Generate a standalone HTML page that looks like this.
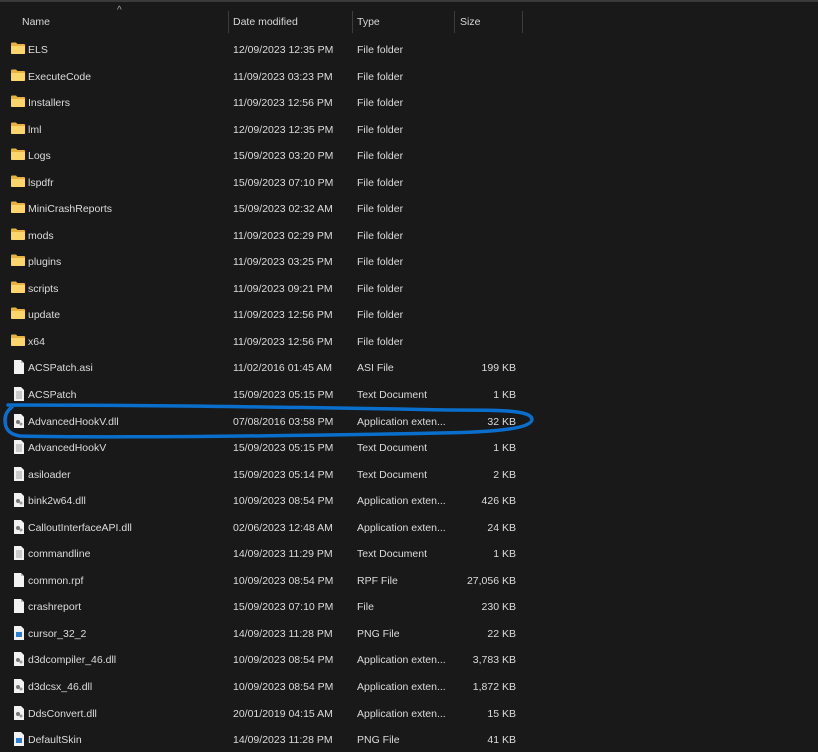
<!DOCTYPE html>
<html><head><meta charset="utf-8"><style>
body{margin:0;width:818px;height:750px;background:#191919;overflow:hidden;font-family:"Segoe UI","Liberation Sans",sans-serif;font-size:10.5px;color:#dcdcdc;position:relative}
.top{position:absolute;left:0;top:0;width:818px;height:2px;background:#3a3a3a}
.h{position:absolute;top:16px;color:#d8d8d8}
.sep{position:absolute;top:11px;width:1px;height:22px;background:#3c3c3c}
.r{position:absolute;left:0;width:818px;height:26px}
.r span{position:absolute;top:8px;white-space:nowrap}
.n{left:28px}.d{left:233px}.t{left:357px}.s{left:440px;width:76px;text-align:right}
.ic{position:absolute;left:11px;top:6px}
</style></head><body>
<div class="top"></div>
<div class="h" style="left:22px">Name</div>
<div class="h" style="left:117px;top:5px;font-size:10px;color:#aaa">^</div>
<div class="sep" style="left:228px"></div><div class="h" style="left:233px">Date modified</div>
<div class="sep" style="left:352px"></div><div class="h" style="left:357px">Type</div>
<div class="sep" style="left:454px"></div><div class="h" style="left:460px">Size</div>
<div class="sep" style="left:522px"></div>
<svg width="0" height="0" style="position:absolute"><defs>
<symbol id="fo" viewBox="0 0 14 12"><path d="M0 1.5Q0 .5 1 .5H5L6.5 2H13Q14 2 14 3V11Q14 12 13 12H1Q0 12 0 11Z" fill="#e8b23c"/><path d="M0 4H14V11Q14 12 13 12H1Q0 12 0 11Z" fill="#fcd66a"/></symbol>
<symbol id="fi" viewBox="0 0 12 14"><path d="M1 0H8L11 3V14H1Z" fill="#f2f2f2"/><path d="M8 0V3H11" fill="#bbb"/></symbol>
<symbol id="tx" viewBox="0 0 12 14"><path d="M1 0H8L11 3V14H1Z" fill="#f2f2f2"/><path d="M3 5H9M3 7H9M3 9H9M3 11H9" stroke="#888" stroke-width=".8"/></symbol>
<symbol id="dl" viewBox="0 0 12 14"><path d="M1 0H8L11 3V14H1Z" fill="#f2f2f2"/><circle cx="5" cy="8" r="2" fill="#777"/><circle cx="8" cy="10" r="1.5" fill="#999"/></symbol>
<symbol id="pn" viewBox="0 0 12 14"><path d="M1 0H8L11 3V14H1Z" fill="#f2f2f2"/><rect x="3" y="6" width="6" height="5" fill="#2a7fd4"/></symbol>
</defs></svg>
<div style="position:absolute;left:0;top:36px">
<div class="r" style="top:0px"><svg class="ic" width="14" height="12"><use href="#fo"/></svg><span class="n">ELS</span><span class="d">12/09/2023 12:35 PM</span><span class="t">File folder</span></div>
<div class="r" style="top:26.54px"><svg class="ic" width="14" height="12"><use href="#fo"/></svg><span class="n">ExecuteCode</span><span class="d">11/09/2023 03:23 PM</span><span class="t">File folder</span></div>
<div class="r" style="top:53.08px"><svg class="ic" width="14" height="12"><use href="#fo"/></svg><span class="n">Installers</span><span class="d">11/09/2023 12:56 PM</span><span class="t">File folder</span></div>
<div class="r" style="top:79.62px"><svg class="ic" width="14" height="12"><use href="#fo"/></svg><span class="n">lml</span><span class="d">12/09/2023 12:35 PM</span><span class="t">File folder</span></div>
<div class="r" style="top:106.16px"><svg class="ic" width="14" height="12"><use href="#fo"/></svg><span class="n">Logs</span><span class="d">15/09/2023 03:20 PM</span><span class="t">File folder</span></div>
<div class="r" style="top:132.7px"><svg class="ic" width="14" height="12"><use href="#fo"/></svg><span class="n">lspdfr</span><span class="d">15/09/2023 07:10 PM</span><span class="t">File folder</span></div>
<div class="r" style="top:159.24px"><svg class="ic" width="14" height="12"><use href="#fo"/></svg><span class="n">MiniCrashReports</span><span class="d">15/09/2023 02:32 AM</span><span class="t">File folder</span></div>
<div class="r" style="top:185.78px"><svg class="ic" width="14" height="12"><use href="#fo"/></svg><span class="n">mods</span><span class="d">11/09/2023 02:29 PM</span><span class="t">File folder</span></div>
<div class="r" style="top:212.32px"><svg class="ic" width="14" height="12"><use href="#fo"/></svg><span class="n">plugins</span><span class="d">11/09/2023 03:25 PM</span><span class="t">File folder</span></div>
<div class="r" style="top:238.86px"><svg class="ic" width="14" height="12"><use href="#fo"/></svg><span class="n">scripts</span><span class="d">11/09/2023 09:21 PM</span><span class="t">File folder</span></div>
<div class="r" style="top:265.4px"><svg class="ic" width="14" height="12"><use href="#fo"/></svg><span class="n">update</span><span class="d">11/09/2023 12:56 PM</span><span class="t">File folder</span></div>
<div class="r" style="top:291.94px"><svg class="ic" width="14" height="12"><use href="#fo"/></svg><span class="n">x64</span><span class="d">11/09/2023 12:56 PM</span><span class="t">File folder</span></div>
<div class="r" style="top:318.48px"><svg class="ic" style="left:13px;top:6px" width="12" height="14"><use href="#fi"/></svg><span class="n">ACSPatch.asi</span><span class="d">11/02/2016 01:45 AM</span><span class="t">ASI File</span><span class="s">199 KB</span></div>
<div class="r" style="top:345.02px"><svg class="ic" style="left:13px;top:6px" width="12" height="14"><use href="#tx"/></svg><span class="n">ACSPatch</span><span class="d">15/09/2023 05:15 PM</span><span class="t">Text Document</span><span class="s">1 KB</span></div>
<div class="r" style="top:371.56px"><svg class="ic" style="left:13px;top:6px" width="12" height="14"><use href="#dl"/></svg><span class="n">AdvancedHookV.dll</span><span class="d">07/08/2016 03:58 PM</span><span class="t">Application exten...</span><span class="s">32 KB</span></div>
<div class="r" style="top:398.1px"><svg class="ic" style="left:13px;top:6px" width="12" height="14"><use href="#tx"/></svg><span class="n">AdvancedHookV</span><span class="d">15/09/2023 05:15 PM</span><span class="t">Text Document</span><span class="s">1 KB</span></div>
<div class="r" style="top:424.64px"><svg class="ic" style="left:13px;top:6px" width="12" height="14"><use href="#tx"/></svg><span class="n">asiloader</span><span class="d">15/09/2023 05:14 PM</span><span class="t">Text Document</span><span class="s">2 KB</span></div>
<div class="r" style="top:451.18px"><svg class="ic" style="left:13px;top:6px" width="12" height="14"><use href="#dl"/></svg><span class="n">bink2w64.dll</span><span class="d">10/09/2023 08:54 PM</span><span class="t">Application exten...</span><span class="s">426 KB</span></div>
<div class="r" style="top:477.72px"><svg class="ic" style="left:13px;top:6px" width="12" height="14"><use href="#dl"/></svg><span class="n">CalloutInterfaceAPI.dll</span><span class="d">02/06/2023 12:48 AM</span><span class="t">Application exten...</span><span class="s">24 KB</span></div>
<div class="r" style="top:504.26px"><svg class="ic" style="left:13px;top:6px" width="12" height="14"><use href="#tx"/></svg><span class="n">commandline</span><span class="d">14/09/2023 11:29 PM</span><span class="t">Text Document</span><span class="s">1 KB</span></div>
<div class="r" style="top:530.8px"><svg class="ic" style="left:13px;top:6px" width="12" height="14"><use href="#fi"/></svg><span class="n">common.rpf</span><span class="d">10/09/2023 08:54 PM</span><span class="t">RPF File</span><span class="s">27,056 KB</span></div>
<div class="r" style="top:557.34px"><svg class="ic" style="left:13px;top:6px" width="12" height="14"><use href="#fi"/></svg><span class="n">crashreport</span><span class="d">15/09/2023 07:10 PM</span><span class="t">File</span><span class="s">230 KB</span></div>
<div class="r" style="top:583.88px"><svg class="ic" style="left:13px;top:6px" width="12" height="14"><use href="#pn"/></svg><span class="n">cursor_32_2</span><span class="d">14/09/2023 11:28 PM</span><span class="t">PNG File</span><span class="s">22 KB</span></div>
<div class="r" style="top:610.42px"><svg class="ic" style="left:13px;top:6px" width="12" height="14"><use href="#dl"/></svg><span class="n">d3dcompiler_46.dll</span><span class="d">10/09/2023 08:54 PM</span><span class="t">Application exten...</span><span class="s">3,783 KB</span></div>
<div class="r" style="top:636.96px"><svg class="ic" style="left:13px;top:6px" width="12" height="14"><use href="#dl"/></svg><span class="n">d3dcsx_46.dll</span><span class="d">10/09/2023 08:54 PM</span><span class="t">Application exten...</span><span class="s">1,872 KB</span></div>
<div class="r" style="top:663.5px"><svg class="ic" style="left:13px;top:6px" width="12" height="14"><use href="#dl"/></svg><span class="n">DdsConvert.dll</span><span class="d">20/01/2019 04:15 AM</span><span class="t">Application exten...</span><span class="s">15 KB</span></div>
<div class="r" style="top:690.04px"><svg class="ic" style="left:13px;top:6px" width="12" height="14"><use href="#pn"/></svg><span class="n">DefaultSkin</span><span class="d">14/09/2023 11:28 PM</span><span class="t">PNG File</span><span class="s">41 KB</span></div>
</div>
<svg style="position:absolute;left:0;top:0" width="818" height="750"><path d="M8 405 C150 405 350 408 450 410 C500 410 530 410 532 419 C532 428 500 432 440 433 C300 436 100 438 20 436 C8 434 5 428 5 420 C5 414 8 410 12 407" fill="none" stroke="#0a6fcc" stroke-width="3.5" stroke-linecap="round"/></svg>
</body></html>
